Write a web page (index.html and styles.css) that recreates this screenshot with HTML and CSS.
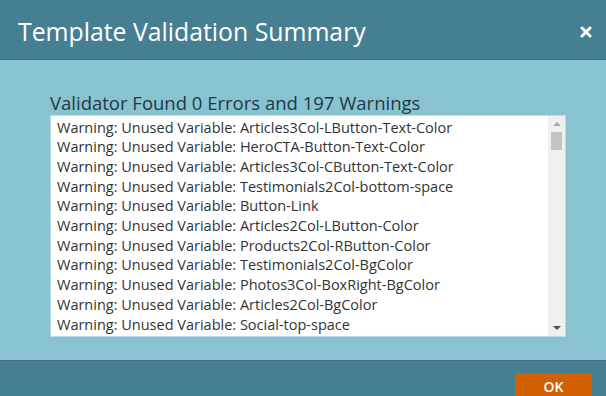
FILE: index.html
```html
<!DOCTYPE html>
<html>
<head>
    <title>Template Validation Summary</title>
    <link rel="stylesheet" href="styles.css">
</head>
<body>
    <div class="dialog">
        <div class="header">
            <div class="title">Template Validation Summary</div>
            <div class="close">
                <svg width="12" height="12" viewBox="0 0 12 12">
                    <path d="M2 2 L10 10 M10 2 L2 10" stroke="#fff" stroke-width="3" stroke-linecap="round"/>
                </svg>
            </div>
        </div>

        <div class="content">
            <div class="summary">Validator Found 0 Errors and 197 Warnings</div>
            <div class="listbox">
                <div class="lines">
                    <div>Warning: Unused Variable: Articles3Col-LButton-Text-Color</div>
                    <div>Warning: Unused Variable: HeroCTA-Button-Text-Color</div>
                    <div>Warning: Unused Variable: Articles3Col-CButton-Text-Color</div>
                    <div>Warning: Unused Variable: Testimonials2Col-bottom-space</div>
                    <div>Warning: Unused Variable: Button-Link</div>
                    <div>Warning: Unused Variable: Articles2Col-LButton-Color</div>
                    <div>Warning: Unused Variable: Products2Col-RButton-Color</div>
                    <div>Warning: Unused Variable: Testimonials2Col-BgColor</div>
                    <div>Warning: Unused Variable: Photos3Col-BoxRight-BgColor</div>
                    <div>Warning: Unused Variable: Articles2Col-BgColor</div>
                    <div>Warning: Unused Variable: Social-top-space</div>
                </div>
                <div class="scrollbar">
                    <span class="arrow up"></span>
                    <span class="thumb"></span>
                    <span class="track"></span>
                    <span class="arrow down"></span>
                </div>
            </div>
        </div>

        <div class="footer">
            <button class="ok">OK</button>
        </div>
    </div>
</body>
</html>
```

FILE: styles.css
```css
body {
    margin: 0;
    height: 100vh;
    font-family: 'Open Sans', 'Noto Sans', sans-serif;
    overflow: hidden;
}

.dialog {
    height: 100%;
    display: flex;
    flex-direction: column;
    background: #89c3d2;
}

/* header bar */
.header {
    height: 59px;
    background: #477f92;
    border-bottom: 1px solid #3f7385;
    display: flex;
    align-items: center;
    justify-content: space-between;
    padding: 0 14px 0 18px;
}
.title {
    color: #fff;
    font-size: 24.8px;
    margin-top: 3px;
}
.close {
    display: flex;
    margin-top: 6px;
}

/* body */
.content {
    flex: 1;
    padding: 30px 40px 23px 50px;
    display: flex;
    flex-direction: column;
}
.summary {
    color: #1e3a44;
    font-size: 18.5px;
    line-height: 25px;
}
.listbox {
    flex: 1;
    background: #fff;
    border: 1px solid #b9dde6;
    display: flex;
}
.lines {
    flex: 1;
    padding: 2px 6px;
    font-size: 14.5px;
    line-height: 19.7px;
    color: #333;
    overflow: hidden;
    white-space: nowrap;
}
.scrollbar {
    width: 17px;
    background: #f0f0f0;
    display: flex;
    flex-direction: column;
    align-items: center;
}
.arrow {
    width: 0;
    height: 0;
    border-left: 4px solid transparent;
    border-right: 4px solid transparent;
    margin: 6px 0;
}
.arrow.up { border-bottom: 4px solid #a8a8a8; }
.arrow.down { border-top: 4px solid #505050; }
.thumb {
    width: 11px;
    height: 18px;
    background: #c3c3c3;
}
.track { flex: 1; }

/* footer */
.footer {
    height: 35px;
    background: #477f92;
    border-top: 1px solid #3f7385;
    display: flex;
    justify-content: flex-end;
    align-items: flex-end;
    padding-right: 14px;
}
.ok {
    width: 77px;
    height: 23px;
    border: none;
    background: #d25f00;
    color: #fff;
    font-family: 'Open Sans', sans-serif;
    font-size: 14px;
    font-weight: 600;
    padding: 4px 0 0;
}
```
